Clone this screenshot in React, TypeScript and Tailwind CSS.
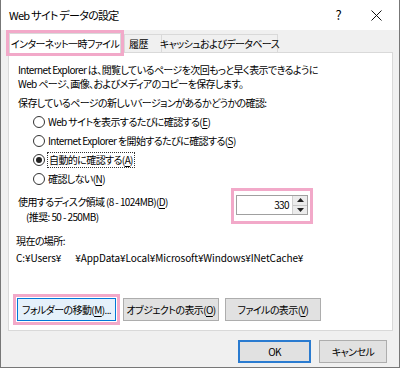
import React from "react";

const font = "[font-family:'Noto_Sans_CJK_JP','Noto_Sans',sans-serif] [font-feature-settings:'palt']";

const U = ({ c }: { c: string }) => <span className="underline underline-offset-2">{c}</span>;

const Radio = ({ checked, children }: { checked?: boolean; children: React.ReactNode }) => (
  <div className="flex items-center h-[19px] pl-[15px]">
    <span className="w-[12px] h-[12px] rounded-full border border-[#333] bg-white flex items-center justify-center">
      {checked && <span className="w-[6px] h-[6px] rounded-full bg-[#222]" />}
    </span>
    <span className={checked ? "ml-[2px] px-[1px] border border-dotted border-[#333] leading-[14px]" : "ml-[3px] leading-[14px]"}>
      {children}
    </span>
  </div>
);

const Btn = ({ w, focus, children }: { w: string; focus?: boolean; children: React.ReactNode }) => (
  <div
    className={`${w} h-[23px] flex items-center justify-center whitespace-nowrap border ${
      focus ? "border-[#0078d7] bg-[#e5f1fb]" : "border-[#adadad] bg-[#e1e1e1]"
    }`}
  >
    {children}
  </div>
);

export default function App() {
  return (
    <div className={`w-[400px] h-[368px] bg-[#f0f0f0] border-x border-b border-[#777] text-[10px] tracking-[-0.6px] text-black ${font} overflow-hidden`}>
      {/* タイトルバー */}
      <div className="h-[30px] bg-white flex items-center pl-[8px] pr-[15px]">
        <span className="text-[11px] tracking-[-0.7px]">Web サイト データの設定</span>
        <span className="ml-auto mr-[30px] text-[13px]">?</span>
        <svg width="11" height="11" viewBox="0 0 11 11" className="mr-[2px]">
          <path d="M0.5 0.5 L10.5 10.5 M10.5 0.5 L0.5 10.5" stroke="#111" strokeWidth="1" />
        </svg>
      </div>

      {/* タブ */}
      <div className="flex items-end h-[19px] mt-[3px] pl-[8px]">
        <div className="relative z-10 w-[112px] h-[20px] -mb-[1px] bg-white border-x border-t border-[#d9d9d9] flex items-center justify-center whitespace-nowrap ring-[3px] ring-[#f2a9c9]">
          インターネット一時ファイル
        </div>
        <div className="w-[38px] h-[18px] ml-[3px] pl-[4px] border border-b-0 border-[#d9d9d9] flex items-center">履歴</div>
        <div className="w-[116px] h-[18px] border border-b-0 border-l-0 border-[#d9d9d9] flex items-center justify-center whitespace-nowrap">
          キャッシュおよびデータベース
        </div>
      </div>

      {/* パネル */}
      <div className="ml-[7px] w-[385px] h-[279px] bg-white border border-[#d9d9d9] pl-[9px] pt-[10px] leading-[14px] whitespace-nowrap">
        <p>Internet Explorer は、閲覧しているページを次回もっと早く表示できるように</p>
        <p>Web ページ、画像、およびメディアのコピーを保存します。</p>
        <p className="mt-[5px]">保存しているページの新しいバージョンがあるかどうかの確認:</p>
        <div className="mt-[2px]">
          <Radio>
            Web サイトを表示するたびに確認する(<U c="E" />)
          </Radio>
          <Radio>
            Internet Explorer を開始するたびに確認する(<U c="S" />)
          </Radio>
          <Radio checked>
            自動的に確認する(<U c="A" />)
          </Radio>
          <Radio>
            確認しない(<U c="N" />)
          </Radio>
        </div>

        <div className="flex">
          <div className="w-[213px] pt-[7px]">
            <p>
              使用するディスク領域 (8 - 1024MB)(<U c="D" />)
            </p>
            <p className="mt-[1px] pl-[8px]">(推奨: 50 - 250MB)</p>
          </div>
          <div className="border-[3px] border-[#f2a9c9] px-[2px] py-[4px]">
            <div className="w-[72px] h-[20px] border border-[#a0a0a0] bg-white flex items-center">
              <span className="flex-1 text-right pr-[3px]">330</span>
              <div className="w-[15px] h-[18px] flex flex-col border-l border-[#d0d0d0]">
                <div className="flex-1 bg-[#ececec] border-b border-[#c8c8c8] flex items-center justify-center">
                  <svg width="7" height="4" viewBox="0 0 7 4">
                    <path d="M0 4 L3.5 0 L7 4 Z" fill="#222" />
                  </svg>
                </div>
                <div className="flex-1 bg-[#ececec] flex items-center justify-center">
                  <svg width="7" height="4" viewBox="0 0 7 4">
                    <path d="M0 0 L3.5 4 L7 0 Z" fill="#222" />
                  </svg>
                </div>
              </div>
            </div>
          </div>
        </div>

        <p className="mt-[10px] -ml-[2px]">現在の場所:</p>
        <p className="mt-[3px] -ml-[2px] flex tracking-[-0.1px]">
          <span>C:¥Users¥</span>
          <span className="w-[14px]" />
          <span>¥AppData¥Local¥Microsoft¥Windows¥INetCache¥</span>
        </p>

        <div className="flex items-center mt-[29px] -ml-[5px]">
          <div className="border-[3px] border-[#f2a9c9] p-[1px]">
            <Btn w="w-[99px]" focus>
              フォルダーの移動(<U c="M" />)...
            </Btn>
          </div>
          <div className="ml-[3px]">
            <Btn w="w-[96px]">
              オブジェクトの表示(<U c="O" />)
            </Btn>
          </div>
          <div className="ml-[6px]">
            <Btn w="w-[96px]">
              ファイルの表示(<U c="V" />)
            </Btn>
          </div>
        </div>
      </div>

      {/* 下部ボタン */}
      <div className="flex justify-end mt-[9px] pr-[12px] gap-[8px]">
        <div className="w-[73px] h-[23px] flex items-center justify-center border-2 border-[#2a7bd0] bg-[#e1e1e1]">OK</div>
        <div className="w-[68px] h-[23px] flex items-center justify-center border border-[#adadad] bg-[#e1e1e1]">キャンセル</div>
      </div>
    </div>
  );
}
